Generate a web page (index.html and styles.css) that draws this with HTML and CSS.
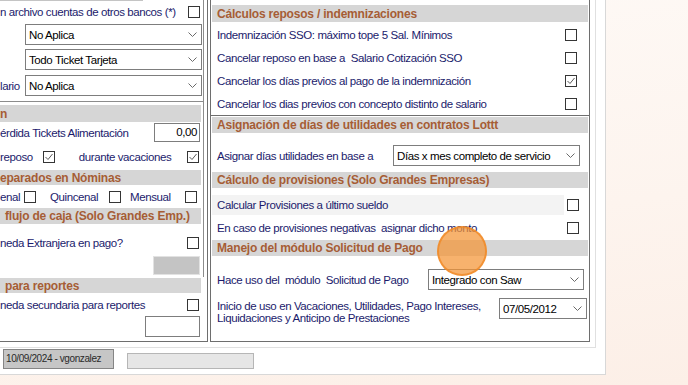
FILE: index.html
```html
<!DOCTYPE html>
<html lang="es">
<head>
<meta charset="utf-8">
<title>Configuración</title>
<link rel="stylesheet" href="styles.css">
</head>
<body>
<div class="screen">
  <div class="window">
    <div class="frame">
      <div class="cols">
        <div class="left">
          <div class="lgroup ga">
            <div class="stub"></div>
            <div class="lrow r1"><span class="lbl">n archivo cuentas de otros bancos (*)</span><span class="cb cb-a"></span></div>
            <div class="sel lsel s1"><span>No Aplica</span><svg class="chev" width="9" height="5" viewBox="0 0 9 5"><polyline points="0.5,0.5 4.5,4.5 8.5,0.5"/></svg></div>
            <div class="sel lsel s2"><span>Todo Ticket Tarjeta</span><svg class="chev" width="9" height="5" viewBox="0 0 9 5"><polyline points="0.5,0.5 4.5,4.5 8.5,0.5"/></svg></div>
            <div class="lrow r3"><span class="lbl w25">lario</span><div class="sel lsel s3"><span>No Aplica</span><svg class="chev" width="9" height="5" viewBox="0 0 9 5"><polyline points="0.5,0.5 4.5,4.5 8.5,0.5"/></svg></div></div>
          </div>
          <div class="lgroup gb">
            <div class="band lband b-n">n</div>
            <div class="lrow r-perdida"><span class="lbl">érdida Tickets Alimentación</span><span class="num">0,00</span></div>
            <div class="lrow r-reposo"><span class="lbl">reposo</span><span class="cb cb-rep"><svg width="10" height="10" viewBox="0 0 10 10"><polyline points="1.5,5 4,7.5 8.5,2"/></svg></span><span class="lbl vac">durante vacaciones</span><span class="cb cb-b"><svg width="10" height="10" viewBox="0 0 10 10"><polyline points="1.5,5 4,7.5 8.5,2"/></svg></span></div>
            <div class="band lband b-sep">eparados en Nóminas</div>
            <div class="lrow r-freq"><span class="lbl w24">enal</span><span class="cb"></span><span class="lbl quin">Quincenal</span><span class="cb"></span><span class="lbl mens">Mensual</span><span class="cb"></span></div>
            <div class="band lband b-flujo">flujo de caja (Solo Grandes Emp.)</div>
            <div class="lrow r-ext"><span class="lbl">neda Extranjera en pago?</span><span class="cb cb-b"></span></div>
            <div class="lrow r-gray"><span class="graybox"></span></div>
          </div>
          <div class="lgroup gc">
            <div class="band lband b-rep">para reportes</div>
            <div class="lrow r-sec"><span class="lbl">neda secundaria para reportes</span><span class="cb cb-c"></span></div>
            <div class="lrow r-inp"><span class="emptybox"></span></div>
          </div>
        </div>
        <div class="right">
          <div class="rgroup g1">
            <div class="band rband b1">Cálculos reposos / indemnizaciones</div>
            <div class="rrow"><span class="lbl">Indemnización SSO: máximo tope 5 Sal. Mínimos</span><span class="cb"></span></div>
            <div class="rrow"><span class="lbl">Cancelar reposo en base a  Salario Cotización SSO</span><span class="cb"></span></div>
            <div class="rrow"><span class="lbl">Cancelar los días previos al pago de la indemnización</span><span class="cb"><svg width="10" height="10" viewBox="0 0 10 10"><polyline points="1.5,5 4,7.5 8.5,2"/></svg></span></div>
            <div class="rrow"><span class="lbl">Cancelar los dias previos con concepto distinto de salario</span><span class="cb"></span></div>
          </div>
          <div class="band rband b2">Asignación de días de utilidades en contratos Lottt</div>
          <div class="rrow2 r-asig"><span class="lbl">Asignar días utilidades en base a</span><div class="sel sel-dias"><span>Días x mes completo de servicio</span><svg class="chev" width="9" height="5" viewBox="0 0 9 5"><polyline points="0.5,0.5 4.5,4.5 8.5,0.5"/></svg></div></div>
          <div class="band rband b3">Cálculo de provisiones (Solo Grandes Empresas)</div>
          <div class="rrow2 r-calc"><span class="lbl hl">Calcular Provisiones a último sueldo</span><span class="cb"></span></div>
          <div class="rrow2 r-caso"><span class="lbl">En caso de provisiones negativas  asignar dicho monto</span><span class="cb"></span></div>
          <div class="band rband b4">Manejo del módulo Solicitud de Pago</div>
          <div class="rrow2 r-uso"><span class="lbl">Hace uso del  módulo  Solicitud de Pago</span><div class="sel sel-uso"><span>Integrado con Saw</span><svg class="chev" width="9" height="5" viewBox="0 0 9 5"><polyline points="0.5,0.5 4.5,4.5 8.5,0.5"/></svg></div></div>
          <div class="rrow2 r-ini"><span class="lbl two">Inicio de uso en Vacaciones, Utilidades, Pago Intereses,<br>Liquidaciones y Anticipo de Prestaciones</span><div class="sel sel-fecha"><span>07/05/2012</span><svg class="chev" width="9" height="5" viewBox="0 0 9 5"><polyline points="0.5,0.5 4.5,4.5 8.5,0.5"/></svg></div></div>
        </div>
      </div>
    </div>
    <div class="status">
      <div class="st1">10/09/2024 - vgonzalez</div>
      <div class="st2"></div>
    </div>
  </div>
  <div class="cursor"></div>
</div>
</body>
</html>
```
FILE: styles.css
```css
* { box-sizing: border-box; }
html, body { margin: 0; padding: 0; }
body {
  width: 688px;
  height: 385px;
  overflow: hidden;
  background: linear-gradient(172deg, #fefaf7 0%, #fdf4ee 60%, #fcefe7 100%);
  font-family: "Liberation Sans", Arial, sans-serif;
  font-size: 11.5px;
  letter-spacing: -0.4px;
  color: #1b1b6c;
}
.screen { position: relative; width: 688px; height: 385px; }
.window {
  width: 606px;
  height: 375px;
  background: #fff;
  border-right: 1px solid #d8d8d8;
  border-bottom: 1px solid #d8d8d8;
}
.frame {
  width: 596px;
  height: 348px;
  border-right: 1px solid #e0e0e0;
  border-bottom: 1px solid #e0e0e0;
}
.cols { display: flex; gap: 2px; height: 342px; }

/* generic */
.lbl { white-space: pre; flex: none; }
.cb {
  flex: none;
  width: 12px;
  height: 12px;
  border: 1px solid #353535;
  background: #fff;
  display: flex;
  align-items: center;
  justify-content: center;
}
.cb svg { fill: none; stroke: #5a5a5a; stroke-width: 1; }
.sel {
  display: flex;
  align-items: center;
  height: 21px;
  border: 1px solid #7d7d7d;
  background: #fff;
  color: #000;
  padding-left: 3px;
  white-space: nowrap;
  flex: none;
}
.chev { margin-left: auto; margin-right: 4px; fill: none; stroke: #6a6a6a; stroke-width: 1; flex: none; }
.band {
  display: flex;
  align-items: center;
  background: #d6d6d6;
  color: #a65d35;
  font-weight: bold;
  font-size: 12px;
  letter-spacing: -0.2px;
  white-space: nowrap;
  overflow: hidden;
  flex: none;
}

/* left column */
.left {
  width: 208px;
  height: 342px;
  border-right: 1px solid #6e6e6e;
  border-bottom: 1px solid #6e6e6e;
  display: flex;
  flex-direction: column;
  overflow: hidden;
}
.lgroup { display: flex; flex-direction: column; flex: none; }
.ga { width: 204px; height: 102px; border-right: 1px solid #8c8c8c; border-bottom: 1px solid #8c8c8c; }
.gb { width: 204px; height: 175px; border-right: 1px solid #8c8c8c; }
.gc { width: 207px; flex: 1; }
.stub { width: 143px; height: 1px; background: #c4c4c4; flex: none; }
.lrow { display: flex; align-items: center; flex: none; }
.r1 { height: 20px; margin-top: 1px; justify-content: space-between; padding-right: 3px; }
.lsel { width: 177px; }
.s1 { margin-top: 2px; margin-left: 25px; }
.s2 { margin-top: 4px; margin-left: 25px; }
.r3 { margin-top: 5px; height: 21px; }
.w25 { width: 25px; }
.lband { margin-right: 2px; }
.b-n { height: 17px; margin-top: 3px; }
.r-perdida { height: 19px; margin-top: 1px; justify-content: space-between; padding-right: 3px; }
.num {
  width: 46px;
  height: 19px;
  border: 1px solid #7d7d7d;
  color: #000;
  text-align: right;
  padding-right: 2px;
  line-height: 17px;
}
.r-reposo { height: 20px; margin-top: 5px; padding-right: 4px; }
.cb-rep { margin-left: 10px; }
.vac { margin-left: 24px; }
.r-reposo .cb-b { margin-left: auto; }
.b-sep { height: 15px; margin-top: 3px; }
.r-freq { height: 18px; margin-top: 3px; }
.w24 { width: 24px; }
.quin { margin-left: 14px; width: 59px; }
.mens { margin-left: 9px; width: 55px; }
.b-flujo { height: 16px; margin-top: 2px; padding-left: 5px; }
.r-ext { height: 20px; margin-top: 9px; justify-content: space-between; padding-right: 4px; }
.r-gray { height: 19px; margin-top: 3px; justify-content: flex-end; padding-right: 3px; }
.graybox { width: 47px; height: 19px; background: #c4c4c4; border: 1px solid #e2e2e2; }
.b-rep { height: 15px; margin-top: 1px; margin-right: 6px; padding-left: 5px; }
.r-sec { height: 18px; margin-top: 3px; justify-content: space-between; padding-right: 8px; }
.r-inp { height: 21px; margin-top: 2px; justify-content: flex-end; padding-right: 7px; }
.emptybox { width: 55px; height: 21px; border: 1px solid #7d7d7d; background: #fff; }

/* right panel */
.right {
  width: 380px;
  height: 342px;
  border: 1px solid #6e6e6e;
  border-top: none;
  display: flex;
  flex-direction: column;
}
.rgroup { display: flex; flex-direction: column; flex: none; }
.g1 { height: 116px; border-bottom: 1px solid #6e6e6e; }
.rband { margin: 0 1px; padding-left: 5px; height: 16px; }
.b1 { height: 17px; margin-top: 5px; }
.rrow { display: flex; align-items: center; height: 23px; padding-left: 6px; padding-right: 12px; justify-content: space-between; flex: none; }
.b1 + .rrow { margin-top: 1px; }
.b2 { margin-top: 1px; }
.rrow2 { display: flex; align-items: center; padding-left: 6px; flex: none; }
.r-asig { height: 21px; margin-top: 12px; padding-right: 9px; justify-content: space-between; }
.sel-dias { width: 187px; }
.b3 { margin-top: 6px; }
.r-calc { height: 20px; margin-top: 7px; padding-left: 1px; padding-right: 10px; }
.hl { background: #f3f3f3; height: 20px; display: flex; align-items: center; padding-left: 5px; flex: 1; margin-right: 3px; }
.r-caso { height: 21px; margin-top: 2px; padding-right: 10px; justify-content: space-between; }
.b4 { margin-top: 2px; }
.r-uso { height: 21px; margin-top: 13px; padding-right: 5px; justify-content: space-between; }
.sel-uso { width: 156px; }
.r-ini { margin-top: 8px; padding-right: 2px; align-items: flex-start; justify-content: space-between; }
.two { line-height: 12.5px; padding-top: 1.5px; }
.sel-fecha { width: 88px; }

/* status */
.status { display: flex; align-items: flex-end; gap: 13px; padding-left: 3px; margin-top: 1px; height: 20px; }
.st1 {
  width: 111px;
  height: 20px;
  background: #c6c6c6;
  border: 1px solid #858585;
  color: #2a2a2a;
  font-size: 10px;
  padding-left: 2px;
  line-height: 18px;
  white-space: nowrap;
}
.st2 { width: 127px; height: 16px; background: #e6e6e6; border: 1px solid #b6b6b6; }

/* pointer highlight */
.cursor {
  position: absolute;
  left: 437px;
  top: 226px;
  width: 50px;
  height: 50px;
  border-radius: 50%;
  background: rgba(244, 148, 52, 0.72);
  border: 2px solid rgba(240, 135, 35, 0.75);
}
```
